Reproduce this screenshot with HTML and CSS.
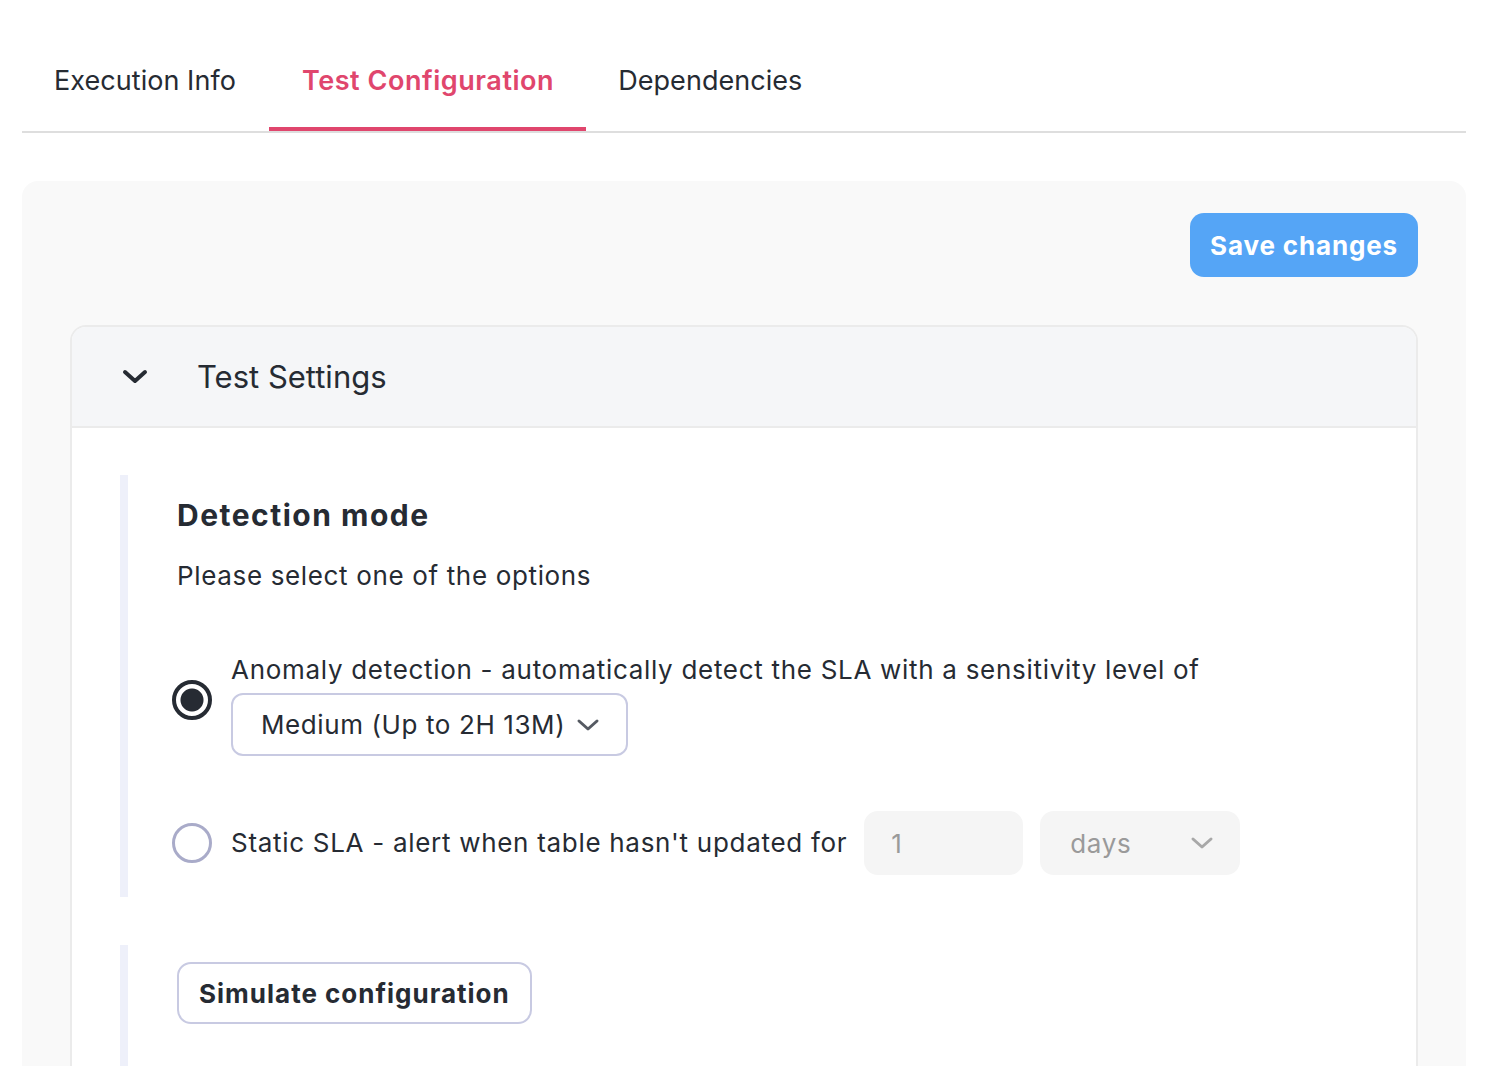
FILE: index.html
```html
<!DOCTYPE html>
<html lang="en">
<head>
  <meta charset="UTF-8">
  <meta name="viewport" content="width=device-width, initial-scale=1.0">
  <title>Test Configuration</title>
  <link rel="stylesheet" href="styles.css">
</head>
<body>
  <div class="page">
    <div class="tabs">
      <div class="tab">Execution Info</div>
      <div class="tab active">Test Configuration</div>
      <div class="tab">Dependencies</div>
    </div>

    <div class="panel">
      <div class="panel-actions">
        <button class="btn-save">Save changes</button>
      </div>

      <div class="card">
        <div class="card-header">
          <svg class="chevron" width="26" height="16" viewBox="0 0 26 16">
            <path d="M3 3 L13 12 L23 3" fill="none" stroke="#262b33" stroke-width="4" stroke-linecap="round" stroke-linejoin="round"/>
          </svg>
          <span class="card-title">Test Settings</span>
        </div>

        <div class="card-body">
          <div class="section">
            <h3 class="section-title">Detection mode</h3>
            <p class="section-sub">Please select one of the options</p>

            <div class="option first">
              <span class="radio checked"></span>
              <div class="option-body">
                <div class="option-label">Anomaly detection - automatically detect the SLA with a sensitivity level of</div>
                <div class="select outlined">
                  <span>Medium (Up to 2H 13M)</span>
                  <svg width="24" height="14" viewBox="0 0 24 14"><path d="M3 3 L12 11 L21 3" fill="none" stroke="#555a62" stroke-width="3" stroke-linecap="round" stroke-linejoin="round"/></svg>
                </div>
              </div>
            </div>

            <div class="option second">
              <span class="radio"></span>
              <div class="option-label">Static SLA - alert when table hasn't updated for</div>
              <div class="field num">1</div>
              <div class="field unit">
                <span>days</span>
                <svg width="24" height="14" viewBox="0 0 24 14"><path d="M3 3 L12 11 L21 3" fill="none" stroke="#a8a8a8" stroke-width="3" stroke-linecap="round" stroke-linejoin="round"/></svg>
              </div>
            </div>
          </div>

          <div class="section last">
            <button class="btn-outline">Simulate configuration</button>
          </div>
        </div>
      </div>
    </div>
  </div>
</body>
</html>
```

FILE: styles.css
```css
body {
  margin: 0;
  font-family: Inter, "Noto Sans", sans-serif;
  color: #262b33;
  background-color: #fff;
}
.page {
  padding: 0 34px 0 22px;
}
.tabs {
  display: flex;
  margin-top: 32px;
  border-bottom: 2px solid #dedede;
}
.tab {
  padding: 32px 33px 29px 32px;
  font-size: 27px;
  line-height: 34px;
  letter-spacing: 0.05px;
  border-bottom: 4px solid transparent;
}
.tab.active {
  color: #e0466d;
  font-weight: 600;
  letter-spacing: 0.55px;
  border-bottom-color: #e0466d;
  padding-left: 33px;
  padding-right: 32px;
}
.panel {
  margin-top: 48px;
  background-color: #f9f9f9;
  border-radius: 16px 16px 0 0;
  padding: 32px 48px 0 48px;
  height: 900px;
}
.panel-actions {
  display: flex;
  justify-content: flex-end;
  margin-bottom: 48px;
}
.btn-save {
  height: 64px;
  padding: 0 20px;
  border: none;
  border-radius: 14px;
  background-color: #55a5f6;
  color: #fff;
  font-family: inherit;
  font-size: 26px;
  font-weight: 700;
  letter-spacing: 0.85px;
}
.card {
  border: 2px solid #ebebeb;
  border-bottom: none;
  border-radius: 16px 16px 0 0;
  background-color: #fff;
  overflow: hidden;
}
.card-header {
  display: flex;
  align-items: center;
  height: 99px;
  padding-left: 50px;
  background-color: #f5f6f8;
  border-bottom: 2px solid #ebebeb;
}
.chevron {
  margin-right: 49px;
}
.card-title {
  font-size: 31px;
}
.card-body {
  padding: 47px 48px 0 48px;
}
.section {
  border-left: 8px solid #eef0fa;
  padding: 22px 0 22px 49px;
}
.section.last {
  margin-top: 48px;
  padding: 17px 0 60px 49px;
}
.section-title {
  margin: 0;
  font-size: 30px;
  line-height: 36px;
  font-weight: 700;
  letter-spacing: 1.5px;
}
.section-sub {
  margin: 27px 0 0 0;
  font-size: 26px;
  line-height: 32px;
  letter-spacing: 0.65px;
}
.option {
  display: flex;
  align-items: center;
  margin-left: -5px;
  font-size: 26px;
  letter-spacing: 0.7px;
}
.option.first {
  margin-top: 62px;
}
.option.second {
  margin-top: 55px;
}
.radio {
  box-sizing: border-box;
  flex: none;
  width: 40px;
  height: 40px;
  border-radius: 50%;
  border: 3px solid #a9abc9;
  margin-right: 19px;
}
.radio.checked {
  border: 4px solid #262b33;
  background: radial-gradient(circle, #262b33 0 11px, transparent 12px);
  margin-top: -10px;
}
.option-label {
  line-height: 32px;
}
.select {
  display: flex;
  align-items: center;
  justify-content: space-between;
  box-sizing: border-box;
  margin-top: 7px;
  width: 397px;
  height: 63px;
  padding: 0 26px 0 28px;
  border: 2px solid #c8cae2;
  border-radius: 12px;
  letter-spacing: 0.6px;
}
.field {
  display: flex;
  align-items: center;
  box-sizing: border-box;
  height: 64px;
  background-color: #f5f5f5;
  border-radius: 14px;
  color: #9a9a9a;
}
.field.num {
  width: 159px;
  margin-left: 17px;
  padding-left: 27px;
}
.field.unit {
  width: 200px;
  margin-left: 17px;
  padding: 0 26px 0 30px;
  justify-content: space-between;
}
.btn-outline {
  height: 62px;
  padding: 0 20px;
  background-color: #fff;
  border: 2px solid #c8cae2;
  border-radius: 14px;
  color: #262b33;
  font-family: inherit;
  font-size: 26px;
  font-weight: 700;
  letter-spacing: 1px;
}
```
